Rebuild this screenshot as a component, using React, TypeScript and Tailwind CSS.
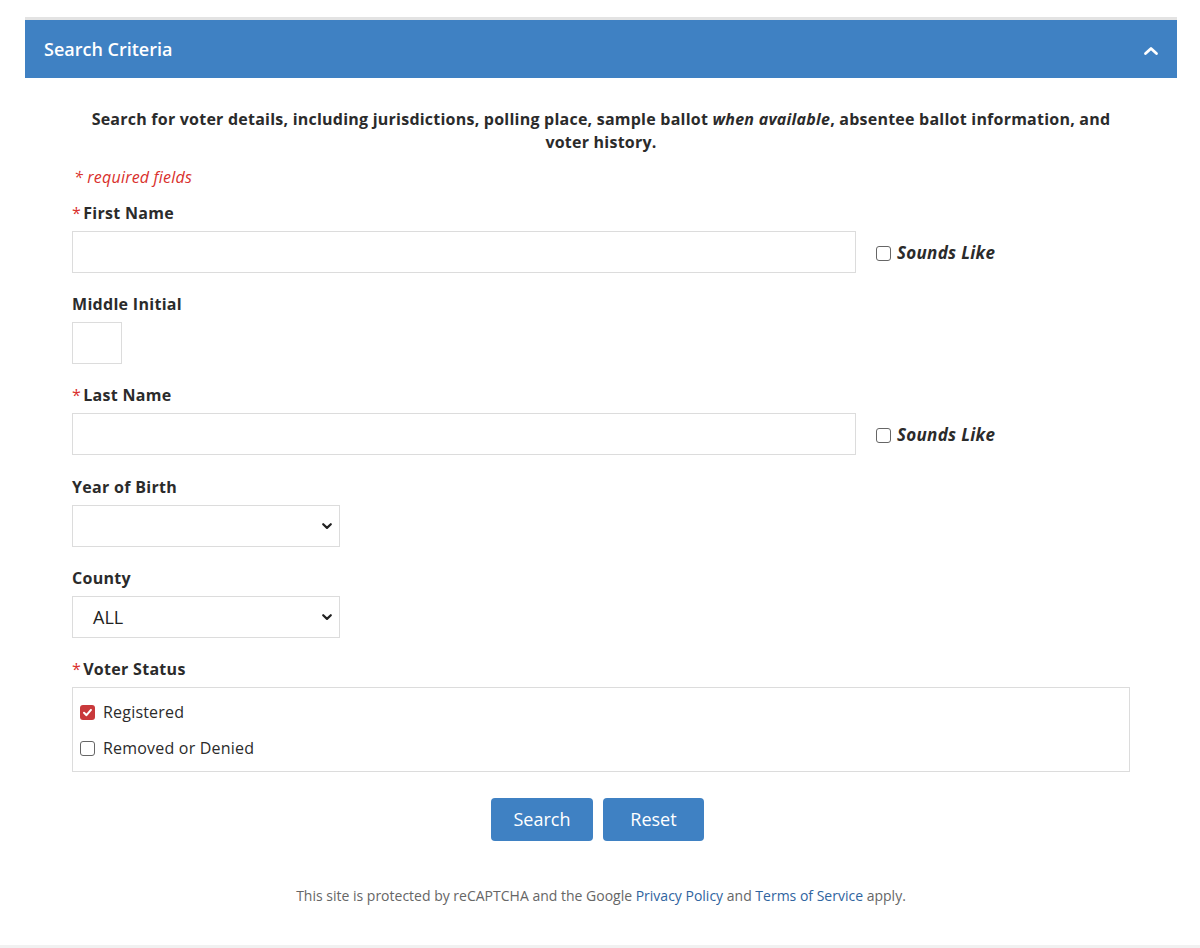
import React from "react";

function Box({ checked = false }: { checked?: boolean }) {
  if (checked) {
    return (
      <span className="inline-flex h-[15px] w-[15px] shrink-0 items-center justify-center rounded-[3px] bg-[#c9393b]">
        <svg width="11" height="11" viewBox="0 0 12 12">
          <path d="M2.2 6.3 L4.9 8.9 L9.8 3.2" fill="none" stroke="#fff" strokeWidth="2.2" strokeLinecap="round" strokeLinejoin="round" />
        </svg>
      </span>
    );
  }
  return <span className="inline-block h-[15px] w-[15px] shrink-0 rounded-[3px] border border-[#666] bg-white" />;
}

function Label({ text, req = false }: { text: string; req?: boolean }) {
  return (
    <div className="mb-[6px] h-[24px] text-[16px] font-bold leading-[24px] tracking-[0.3px] text-[#2b2b2b]">
      {req && <span className="mr-[2px] font-normal text-[#d9302c]">*</span>}
      {text}
    </div>
  );
}

function Chevron() {
  return (
    <svg className="pointer-events-none absolute right-[6px] top-1/2 -translate-y-1/2" width="12" height="12" viewBox="0 0 12 12">
      <path d="M2.2 4.2 L6 7.9 L9.8 4.2" fill="none" stroke="#222" strokeWidth="2.2" strokeLinecap="round" strokeLinejoin="round" />
    </svg>
  );
}

function SoundsLike() {
  return (
    <label className="ml-[20px] flex items-center gap-[6px] pt-[2px] text-[17px] font-bold italic tracking-[0.3px] text-[#2b2b2b]">
      <Box />
      <span className="leading-[24px]">Sounds Like</span>
    </label>
  );
}

export default function App() {
  return (
    <div className="min-h-[948px] bg-white font-['Open_Sans','Noto_Sans',sans-serif] text-[#333]">
      <div className="ml-[25px] mt-[17px] w-[1152px] border-t-[3px] border-[#e3e3e3]">
        <div className="flex h-[58px] items-center justify-between bg-[#3f81c3] pl-[19px] pr-[20px]">
          <span className="text-[18px] font-semibold text-white">Search Criteria</span>
          <svg width="16" height="12" viewBox="0 0 16 12" className="mr-[-2px] mt-[4px]">
            <path d="M2.5 8.5 L8 3.5 L13.5 8.5" fill="none" stroke="#fff" strokeWidth="2.8" strokeLinecap="round" strokeLinejoin="round" />
          </svg>
        </div>

        <div className="px-[47px] pt-[30px]">
          <p className="px-[10px] text-center text-[16px] font-bold leading-[23px] tracking-[0.23px] text-[#2b2b2b]">
            Search for voter details, including jurisdictions, polling place, sample ballot <em>when available</em>, absentee ballot information, and voter history.
          </p>

          <div className="mt-[11px] mb-[12px] pl-[2px] text-[16px] italic leading-[24px] tracking-[0.2px] text-[#d9302c]">* required fields</div>

          <Label text="First Name" req />
          <div className="mb-[19px] flex items-center">
            <div className="h-[42px] w-[784px] border border-[#dcdcdc] bg-white" />
            <SoundsLike />
          </div>

          <Label text="Middle Initial" />
          <div className="mb-[19px] h-[42px] w-[50px] border border-[#dcdcdc] bg-white" />

          <Label text="Last Name" req />
          <div className="mb-[20px] flex items-center">
            <div className="h-[42px] w-[784px] border border-[#dcdcdc] bg-white" />
            <SoundsLike />
          </div>

          <Label text="Year of Birth" />
          <div className="relative mb-[19px] h-[42px] w-[268px] border border-[#dcdcdc] bg-white">
            <Chevron />
          </div>

          <Label text="County" />
          <div className="relative mb-[19px] flex h-[42px] w-[268px] items-center border border-[#dcdcdc] bg-white pl-[20px] text-[18px] text-[#222]">
            ALL
            <Chevron />
          </div>

          <Label text="Voter Status" req />
          <div className="flex h-[85px] flex-col gap-[12px] border border-[#dcdcdc] pl-[7px] pt-[12px]">
            <label className="flex h-[24px] items-center gap-[8px] text-[16px] tracking-[0.2px] text-[#2b2b2b]">
              <Box checked />
              <span>Registered</span>
            </label>
            <label className="flex h-[24px] items-center gap-[8px] text-[16px] tracking-[0.2px] text-[#2b2b2b]">
              <Box />
              <span>Removed or Denied</span>
            </label>
          </div>

          <div className="mt-[26px] flex justify-center gap-[10px] pr-[7px]">
            <button className="h-[43px] w-[102px] rounded-[4px] bg-[#3f81c3] text-[18px] text-white">Search</button>
            <button className="h-[43px] w-[101px] rounded-[4px] bg-[#3f81c3] text-[18px] text-white">Reset</button>
          </div>

          <p className="mt-[45px] text-center text-[14px] leading-[20px] text-[#666]">
            This site is protected by reCAPTCHA and the Google <span className="text-[#2f64a0]">Privacy Policy</span> and{" "}
            <span className="text-[#2f64a0]">Terms of Service</span> apply.
          </p>
        </div>
      </div>
      <div className="mt-[39px] h-[20px] bg-[#f1f1f1]" />
    </div>
  );
}
